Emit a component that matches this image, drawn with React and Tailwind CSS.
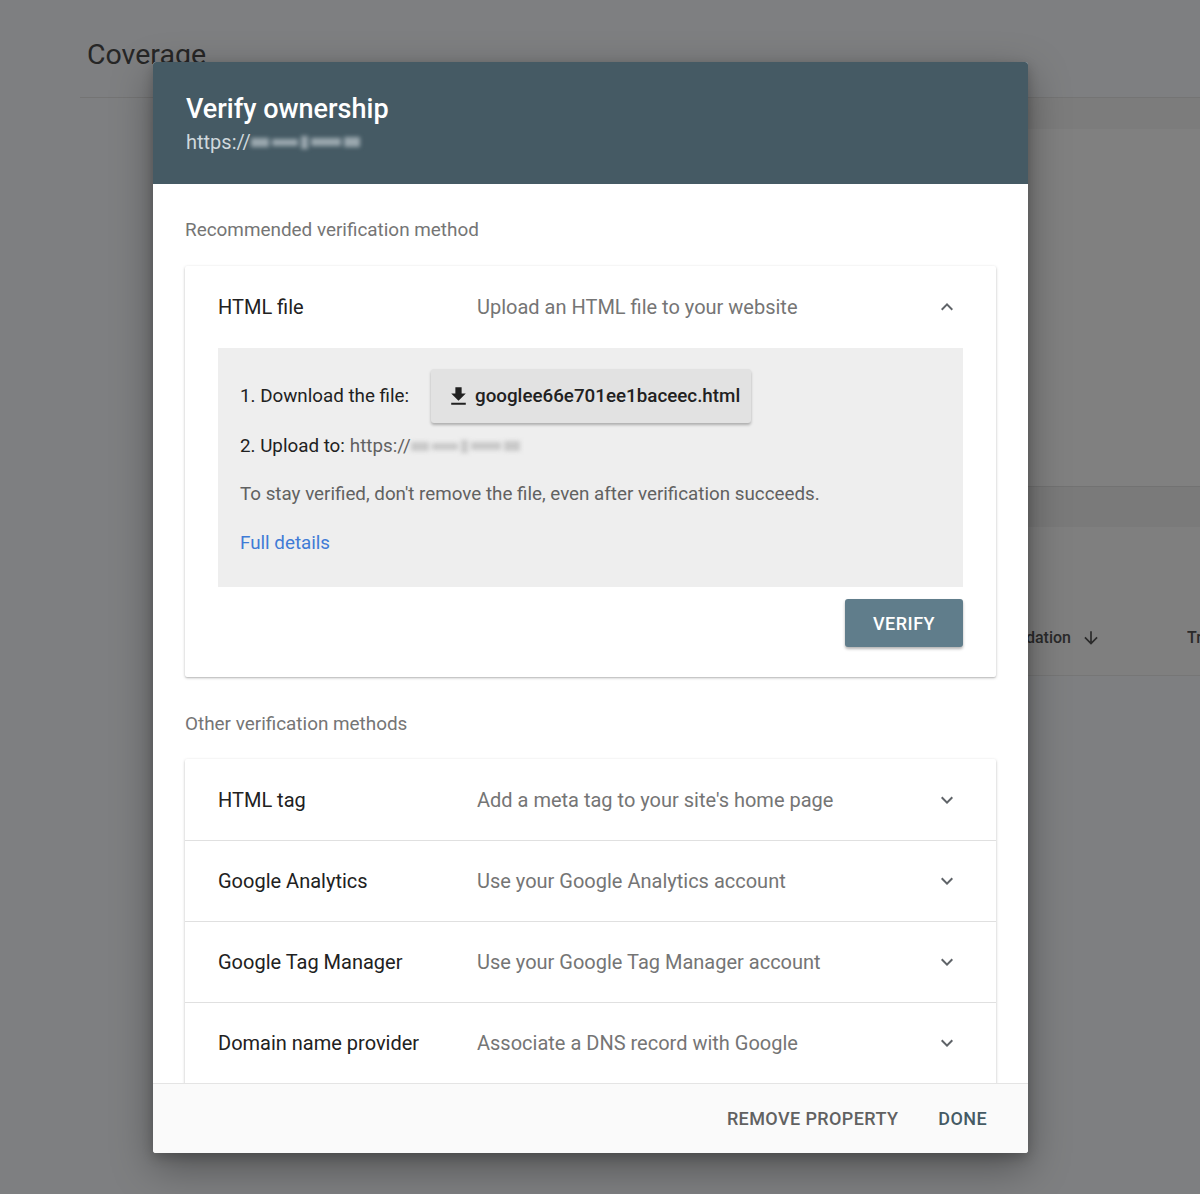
import React from 'react'

const font = { fontFamily: 'Roboto, "Noto Sans", Arial, sans-serif' }

function ExpandMore() {
  return (
    <svg width="24" height="24" viewBox="0 0 24 24" fill="#5f6368">
      <path d="M16.59 8.59L12 13.17 7.41 8.59 6 10l6 6 6-6z" />
    </svg>
  )
}

function ExpandLess() {
  return (
    <svg width="24" height="24" viewBox="0 0 24 24" fill="#5f6368">
      <path d="M12 8l-6 6 1.41 1.41L12 10.83l4.59 4.58L18 14z" />
    </svg>
  )
}

// blurred-out part of the url
function Blur({ dark }) {
  const c = dark ? 'bg-[#9aa7ae]' : 'bg-[#c9c9c9]'
  return (
    <span className="inline-flex items-center gap-[3px] blur-[2px] align-middle">
      <span className={`inline-block h-[9px] w-[18px] ${c}`}></span>
      <span className={`inline-block h-[7px] w-[26px] ${c}`}></span>
      <span className={`inline-block h-[13px] w-[7px] ${c}`}></span>
      <span className={`inline-block h-[8px] w-[30px] ${c}`}></span>
      <span className={`inline-block h-[10px] w-[16px] ${c}`}></span>
    </span>
  )
}

const others = [
  ['HTML tag', "Add a meta tag to your site's home page"],
  ['Google Analytics', 'Use your Google Analytics account'],
  ['Google Tag Manager', 'Use your Google Tag Manager account'],
  ['Domain name provider', 'Associate a DNS record with Google'],
]

export default function App() {
  return (
    <div className="relative h-[1194px] w-[1200px] overflow-hidden bg-[#7e7f81]" style={font}>
      {/* page behind the overlay */}
      <div className="pl-[80px]">
        <div className="h-[98px] border-b border-[#747474] pl-[7px] pt-[37px]">
          <div className="text-[28.5px] leading-[36px] text-[#262626]">Coverage</div>
        </div>
        <div className="ml-[140px]">
          <div className="h-[31px] bg-[#7c7c7c]"></div>
          <div className="h-[357px] bg-[#808080]"></div>
          <div className="h-[41px] border-t border-[#727272] bg-[#7a7a7a]"></div>
          <div className="flex h-[149px] items-end border-b border-[#767676] bg-[#7f7f7f] pb-[25px]">
            <div className="ml-auto flex items-center text-[16px] font-medium text-[#2a2a2a]">
              <span>Validation</span>
              <svg className="ml-[10px]" width="20" height="20" viewBox="0 0 24 24" fill="#2a2a2a">
                <path d="M20 12l-1.41-1.41L13 16.17V4h-2v12.17l-5.58-5.59L4 12l8 8 8-8z" />
              </svg>
              <span className="ml-[86px] w-[13px] overflow-hidden whitespace-nowrap">Tr</span>
            </div>
          </div>
        </div>
      </div>

      {/* dialog */}
      <div className="absolute left-[153px] top-[62px] flex w-[875px] flex-col overflow-hidden rounded-[3px] bg-white shadow-[0_14px_40px_rgba(0,0,0,0.35),0_4px_12px_rgba(0,0,0,0.2)]">
        <div className="h-[122px] bg-[#455a64] px-[33px] pt-[30px]">
          <div className="text-[27px] font-medium leading-[34px] text-white">Verify ownership</div>
          <div className="mt-[2px] flex items-center text-[20px] leading-[28px] text-[#cfd8dc]">
            https://<Blur dark />
          </div>
        </div>

        <div className="h-[899px] overflow-hidden px-[32px]">
          <div className="pb-[24px] pt-[34px] text-[18.9px] leading-[24px] text-[#757575]">Recommended verification method</div>

          <div className="rounded-[2px] bg-white shadow-[0_1px_3px_rgba(0,0,0,0.25),0_1px_1px_rgba(0,0,0,0.08)]">
            <div className="flex h-[82px] items-center pl-[33px] pr-[37px]">
              <div className="w-[259px] text-[20px] text-[#212121]">HTML file</div>
              <div className="flex-1 text-[20px] text-[#757575]">Upload an HTML file to your website</div>
              <ExpandLess />
            </div>
            <div className="px-[33px] pb-[30px]">
              <div className="bg-[#eeeeee] pb-[32px] pl-[22px] pt-[21px]">
                <div className="flex items-center">
                  <span className="w-[191px] text-[18.8px] text-[#212121]">1. Download the file:</span>
                  <button className="flex h-[54px] items-center gap-[4px] rounded-[3px] bg-[#e2e2e2] pl-[15px] pr-[11px] text-[18.8px] font-medium text-[#212121] shadow-[0_2px_3px_rgba(0,0,0,0.28)]">
                    <svg width="25" height="25" viewBox="0 0 24 24" fill="#212121">
                      <path d="M19 9h-4V3H9v6H5l7 7 7-7zM5 18v2h14v-2H5z" />
                    </svg>
                    googlee66e701ee1baceec.html
                  </button>
                </div>
                <div className="mt-[11px] flex items-center text-[18.8px] leading-[24px] text-[#212121]">
                  2. Upload to:<span className="ml-[5px] text-[#616161]">https://</span><Blur />
                </div>
                <div className="mt-[24px] text-[18.8px] leading-[24px] text-[#616161]">
                  To stay verified, don't remove the file, even after verification succeeds.
                </div>
                <div className="mt-[25px] text-[18.8px] leading-[24px] text-[#3f7bd6]">Full details</div>
              </div>
              <div className="mt-[12px] flex justify-end">
                <button className="h-[48px] w-[118px] rounded-[3px] bg-[#607d8b] text-[18px] font-medium tracking-[0.5px] text-white shadow-[0_2px_3px_rgba(0,0,0,0.3)]">
                  VERIFY
                </button>
              </div>
            </div>
          </div>

          <div className="pb-[23px] pt-[35px] text-[18.9px] leading-[24px] text-[#757575]">Other verification methods</div>

          <div className="rounded-[2px] bg-white shadow-[0_1px_3px_rgba(0,0,0,0.25),0_1px_1px_rgba(0,0,0,0.08)]">
            {others.map(([name, desc], i) => (
              <div key={name} className={`flex h-[81px] items-center pl-[33px] pr-[37px] ${i ? 'border-t border-[#e0e0e0]' : ''}`}>
                <div className="w-[259px] text-[20px] text-[#212121]">{name}</div>
                <div className="flex-1 text-[20px] text-[#757575]">{desc}</div>
                <ExpandMore />
              </div>
            ))}
            {/* rest of the list, scrolled under the footer */}
            <div className="h-[81px] border-t border-[#e0e0e0]"></div>
          </div>
        </div>

        <div className="flex h-[70px] items-center justify-end gap-[40px] border-t border-[#e4e4e4] bg-[#fafafa] pr-[41px]">
          <button className="text-[18px] font-medium tracking-[0.4px] text-[#616161]">REMOVE PROPERTY</button>
          <button className="text-[18px] font-medium tracking-[0.4px] text-[#455a64]">DONE</button>
        </div>
      </div>
    </div>
  )
}
